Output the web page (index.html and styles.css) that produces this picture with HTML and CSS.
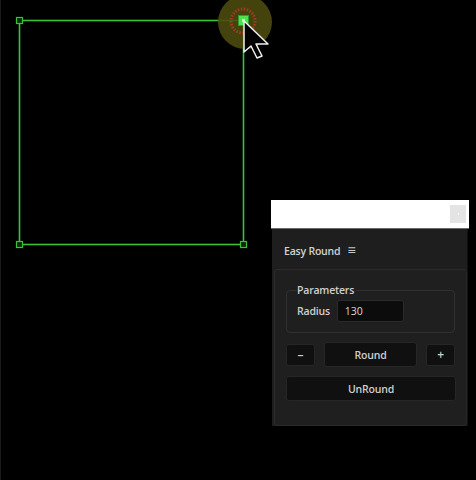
FILE: index.html
```html
<!DOCTYPE html>
<html>
<head>
<meta charset="utf-8">
<link rel="stylesheet" href="styles.css">
</head>
<body>
<div class="stage">
  <svg class="canvas" width="476" height="480" viewBox="0 0 476 480">
    <rect x="18.5" y="20.5" width="224" height="224" fill="none" stroke="#39c239" stroke-width="1.6"/>
    <rect x="15.5" y="17.5" width="6" height="6" fill="#0a2a0a" stroke="#39c239" stroke-width="1.2"/>
    <rect x="15.5" y="241.5" width="6" height="6" fill="#0a2a0a" stroke="#39c239" stroke-width="1.2"/>
    <rect x="239.5" y="241.5" width="6" height="6" fill="#0a2a0a" stroke="#39c239" stroke-width="1.2"/>
    <circle cx="244" cy="22" r="27" fill="#4d4a0e" fill-opacity="0.9"/>
    <circle cx="242" cy="21" r="12" fill="none" stroke="#c0392b" stroke-width="3" stroke-dasharray="1.5 1.5" opacity="0.75"/>
    <rect x="237.5" y="15.5" width="10" height="10" fill="#4fe04f" stroke="#2f9a2f" stroke-width="1"/>
    <rect x="241" y="19" width="3" height="3" fill="#b8ffb8"/>
    <path d="M243 21 L243 52 L250 46 L256 58 L261 56 L255 44 L267 44 Z" fill="#000" stroke="#f0f0f0" stroke-width="1.5" stroke-linejoin="round"/>
  </svg>

  <div class="window">
    <div class="titlebar"><span class="tb-btn"></span></div>
    <div class="panel">
      <div class="panel-head">
        <span class="panel-title">Easy Round</span>
        <span class="menu">&#8801;</span>
      </div>
      <div class="panel-body">
        <fieldset class="params">
          <legend>Parameters</legend>
          <div class="row">
            <label>Radius</label>
            <div class="input">130</div>
          </div>
        </fieldset>
        <div class="btn-row">
          <div class="btn small">&ndash;</div>
          <div class="btn wide">Round</div>
          <div class="btn small">+</div>
        </div>
        <div class="btn full">UnRound</div>
      </div>
    </div>
  </div>
</div>
</body>
</html>
```

FILE: styles.css
```css
html, body {
  margin: 0;
  padding: 0;
  background: #000;
  width: 476px;
  height: 480px;
  overflow: hidden;
  font-family: "Open Sans", "Noto Sans", sans-serif;
}
.stage {
  position: relative;
  width: 476px;
  height: 480px;
  border-left: 1px solid #1a1a1a;
  box-sizing: border-box;
}
.canvas {
  position: absolute;
  left: 0;
  top: 0;
}
.window {
  position: absolute;
  left: 270px;
  top: 200px;
  width: 198px;
}
.titlebar {
  height: 28px;
  background: #fff;
  border-bottom: 1px solid #6a6a6a;
  display: flex;
  justify-content: flex-end;
  align-items: center;
  padding-right: 3px;
}
.tb-btn {
  width: 16px;
  height: 18px;
  background: #e4e4e4;
  position: relative;
}
.tb-btn::after {
  content: "";
  position: absolute;
  left: 8px;
  top: 8px;
  width: 1px;
  height: 2px;
  background: #f8f8f8;
}
.panel {
  margin-left: 1px;
  width: 196px;
  height: 197px;
  background: #1e1e1e;
  border-right: 1px solid #111;
  display: flex;
  flex-direction: column;
  box-sizing: border-box;
}
.panel-head {
  height: 40px;
  box-sizing: border-box;
  padding-top: 3px;
  display: flex;
  align-items: center;
  padding-left: 12px;
  gap: 7px;
  color: #d2d2d2;
  font-size: 10.5px;
  font-weight: 600;
}
.panel-title {
  letter-spacing: -0.2px;
}
.menu {
  font-size: 14px;
  font-weight: 400;
  line-height: 1;
  color: #c8c8c8;
  margin-top: -1px;
}
.panel-body {
  margin-left: 2px;
  flex: 1;
  border: 1px solid #2c2c2c;
  border-right-color: #262626;
  border-radius: 4px;
  background: #1f1f1f;
  padding: 13px 11px 0 11px;
  display: flex;
  flex-direction: column;
  gap: 9px;
}
.params {
  margin: 0;
  border: 1px solid #303030;
  border-radius: 4px;
  padding: 0 10px 10px 10px;
  box-sizing: border-box;
  color: #cfcfcf;
  font-size: 10.5px;
  font-weight: 600;
}
.params legend {
  padding: 0 2px 0 0;
  margin-left: 0;
  line-height: 14px;
  color: #cfcfcf;
  letter-spacing: -0.2px;
}
.row {
  display: flex;
  align-items: center;
  gap: 7px;
  margin-top: 3px;
}
.row label {
  color: #cfcfcf;
  letter-spacing: -0.2px;
}
.input {
  width: 67px;
  height: 22px;
  box-sizing: border-box;
  background: #0c0c0c;
  border: 1px solid #2a2a2a;
  border-radius: 3px;
  color: #d8d8d8;
  font-size: 10.5px;
  font-weight: 400;
  line-height: 20px;
  padding-left: 7px;
}
.btn-row {
  display: flex;
  align-items: center;
}
.btn {
  background: #101010;
  border: 1px solid #262626;
  border-radius: 3px;
  color: #cfcfcf;
  font-size: 10.5px;
  font-weight: 600;
  letter-spacing: -0.2px;
  display: flex;
  align-items: center;
  justify-content: center;
  box-sizing: border-box;
  flex: none;
}
.btn.small {
  width: 29px;
  height: 22px;
  font-size: 12px;
}
.btn.wide {
  width: 93px;
  height: 25px;
  margin: 0 9px;
}
.btn.full {
  width: 170px;
  height: 25px;
}
```
